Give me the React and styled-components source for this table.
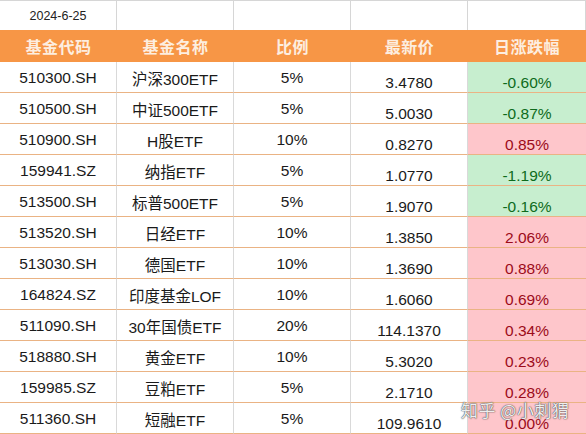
import React from 'react';
import styled, { createGlobalStyle } from 'styled-components';

const Global = createGlobalStyle`
  html, body { margin: 0; padding: 0; background: #fff; }
  body { width: 586px; height: 434px; overflow: hidden; }
`;

const COLS = '117px 117px 117px 117px 118px';

const Sheet = styled.div`
  position: relative;
  width: 586px;
  height: 434px;
  overflow: hidden;
  font-family: "Liberation Sans", Arial, "Noto Sans CJK SC", sans-serif;
  color: #1a1a1a;
`;

const DateRow = styled.div`
  display: grid;
  grid-template-columns: ${COLS};
  height: 30px;
  box-sizing: border-box;
  border-top: 1px solid #d6d6d6;
`;

const DateCell = styled.div`
  display: flex;
  align-items: center;
  justify-content: center;
  font-size: 12.5px;
  color: #222;
  border-right: 1px solid #d6d6d6;
  padding-top: 1px;
`;

const HeadRow = styled.div`
  display: grid;
  grid-template-columns: ${COLS};
  height: 32px;
  background: #f79646;
`;

const HeadCell = styled.div`
  display: flex;
  align-items: center;
  justify-content: center;
  font-family: "Noto Sans CJK SC", sans-serif;
  font-weight: 700;
  font-size: 16px;
  letter-spacing: 0.5px;
  color: #fdeee0;
`;

const Row = styled.div`
  display: grid;
  grid-template-columns: ${COLS};
  height: 31px;
`;

const Cell = styled.div`
  display: flex;
  align-items: ${p => (p.$bottom ? 'flex-end' : 'center')};
  justify-content: center;
  box-sizing: border-box;
  font-size: 15.5px;
  padding-top: ${p => (p.$bottom ? '0' : '2px')};
  border-bottom: 1px solid #eab384;
  border-right: ${p => (p.$last ? 'none' : '1px solid #d9d9d9')};
  background: ${p => (p.$tone === 'up' ? '#fec6cb' : p.$tone === 'down' ? '#c7eecf' : '#fff')};
  color: ${p => (p.$tone === 'up' ? '#9c0b1a' : p.$tone === 'down' ? '#0e6b1c' : '#1a1a1a')};
`;

const Watermark = styled.div`
  position: absolute;
  left: 461px;
  top: 397px;
  font-family: "Noto Sans CJK SC", sans-serif;
  font-size: 17px;
  color: rgba(255, 255, 255, 0.92);
  text-shadow: 0 0 1px rgba(70, 70, 70, 0.9), 0 0 1px rgba(70, 70, 70, 0.9), 0 0 2px rgba(70, 70, 70, 0.4);
  letter-spacing: 0.5px;
  white-space: pre;
`;

const funds = [
  ['510300.SH', '沪深300ETF', '5%', '3.4780', '-0.60%'],
  ['510500.SH', '中证500ETF', '5%', '5.0030', '-0.87%'],
  ['510900.SH', 'H股ETF', '10%', '0.8270', '0.85%'],
  ['159941.SZ', '纳指ETF', '5%', '1.0770', '-1.19%'],
  ['513500.SH', '标普500ETF', '5%', '1.9070', '-0.16%'],
  ['513520.SH', '日经ETF', '10%', '1.3850', '2.06%'],
  ['513030.SH', '德国ETF', '10%', '1.3690', '0.88%'],
  ['164824.SZ', '印度基金LOF', '10%', '1.6060', '0.69%'],
  ['511090.SH', '30年国债ETF', '20%', '114.1370', '0.34%'],
  ['518880.SH', '黄金ETF', '10%', '5.3020', '0.23%'],
  ['159985.SZ', '豆粕ETF', '5%', '2.1710', '0.28%'],
  ['511360.SH', '短融ETF', '5%', '109.9610', '0.00%'],
];

const headers = ['基金代码', '基金名称', '比例', '最新价', '日涨跌幅'];

export default function App() {
  return (
    <Sheet>
      <Global />
      <DateRow>
        <DateCell>2024-6-25</DateCell>
        <DateCell />
        <DateCell />
        <DateCell />
        <DateCell />
      </DateRow>
      <HeadRow>
        {headers.map(h => <HeadCell key={h}>{h}</HeadCell>)}
      </HeadRow>
      {funds.map(([code, name, ratio, price, chg]) => (
        <Row key={code}>
          <Cell>{code}</Cell>
          <Cell>{name}</Cell>
          <Cell>{ratio}</Cell>
          <Cell $bottom>{price}</Cell>
          <Cell $bottom $last $tone={chg.startsWith('-') ? 'down' : 'up'}>{chg}</Cell>
        </Row>
      ))}
      <Watermark>知乎 @小刺猬</Watermark>
    </Sheet>
  );
}
